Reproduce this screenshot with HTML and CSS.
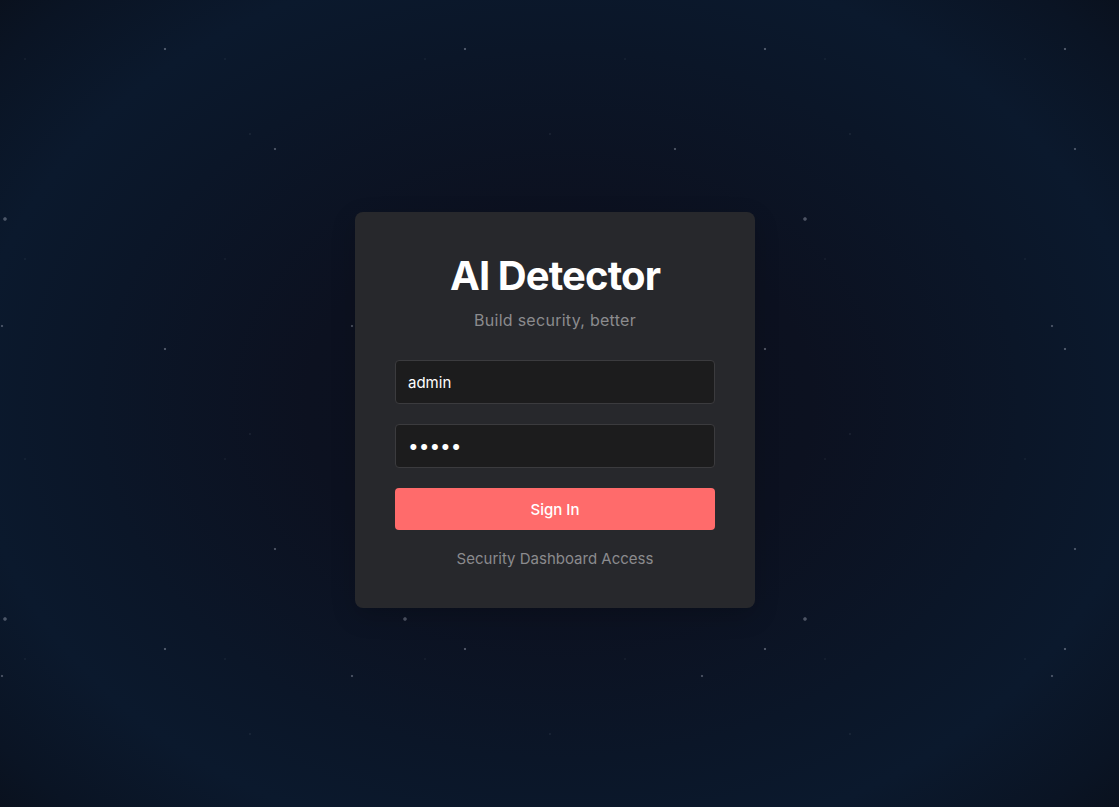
FILE: index.html
```html
<!DOCTYPE html>
<html lang="en">
<head>
<meta charset="utf-8">
<title>AI Detector</title>
<link rel="stylesheet" href="styles.css">
</head>
<body>
<main class="page">
  <form class="card" onsubmit="return false">
    <h1 class="title">AI Detector</h1>
    <p class="subtitle">Build security, better</p>
    <input class="field" type="text" value="admin">
    <input class="field field-secret" type="password" value="admin">
    <button class="btn" type="submit">Sign In</button>
    <p class="footnote">Security Dashboard Access</p>
  </form>
</main>
</body>
</html>
```
FILE: styles.css
```css
* { box-sizing: border-box; }
html, body { margin: 0; height: 100%; }
body {
  font-family: Inter, "Noto Sans", "Liberation Sans", sans-serif;
  background-color: #0b111e;
  background-image:
    radial-gradient(circle at 5px 219px, rgba(200,205,220,0.35) 0, rgba(200,205,220,0.35) 1.3px, transparent 2.2px),
    radial-gradient(circle at 165px 49px, rgba(200,205,220,0.35) 0, rgba(200,205,220,0.35) 0.8px, transparent 1.6px),
    radial-gradient(circle at 25px 59px, rgba(200,205,220,0.16) 0, transparent 1px),
    radial-gradient(circle at 250px 134px, rgba(200,205,220,0.18) 0, transparent 1.1px),
    radial-gradient(circle at 275px 149px, rgba(200,205,220,0.32) 0, rgba(200,205,220,0.32) 0.8px, transparent 1.6px),
    radial-gradient(circle at 2px 326px, rgba(200,205,220,0.3) 0, rgba(200,205,220,0.3) 0.8px, transparent 1.6px),
    radial-gradient(ellipse 75% 80% at 50% 50%, #0c101d 0%, #0c1120 30%, #0b1628 55%, #0b192d 70%, #0a1424 85%, #090d16 100%);
  background-size: 400px 400px, 300px 300px, 200px 200px, 300px 300px, 400px 400px, 350px 350px, 100% 100%;
  background-repeat: repeat, repeat, repeat, repeat, repeat, repeat, no-repeat;
}
.page {
  min-height: 100%;
  display: flex;
  align-items: center;
  justify-content: center;
  padding: 13px 9px 0 0;
}
.card {
  width: 400px;
  background: #27282c;
  border-radius: 8px;
  padding: 40px 40px 40px;
  display: flex;
  flex-direction: column;
  box-shadow: 0 8px 24px rgba(0,0,0,0.18);
}
.title {
  margin: 0;
  font-size: 40px;
  line-height: 48px;
  font-weight: 700;
  color: #ffffff;
  text-align: center;
  letter-spacing: -0.9px;
}
.subtitle {
  margin: 11px 0 0;
  font-size: 16px;
  line-height: 19px;
  color: #8b8b8e;
  text-align: center;
  letter-spacing: 0.28px;
}
.field {
  margin-top: 30px;
  height: 44px;
  width: 100%;
  background: #1c1c1d;
  border: 1px solid #3b3b3e;
  border-radius: 4px;
  padding: 0 12px;
  color: #ffffff;
  font-family: inherit;
  font-size: 15px;
  outline: none;
}
.field + .field { margin-top: 20px; }
.field-secret { font-size: 19px; }
.btn {
  margin-top: 20px;
  height: 42px;
  width: 100%;
  background: #ff6b6b;
  border: none;
  border-radius: 4px;
  color: #ffffff;
  font-family: inherit;
  font-size: 15px;
  font-weight: 500;
  cursor: pointer;
}
.footnote {
  margin: 20px 0 0;
  font-size: 15px;
  line-height: 18px;
  color: #8b8b8e;
  text-align: center;
}
```
